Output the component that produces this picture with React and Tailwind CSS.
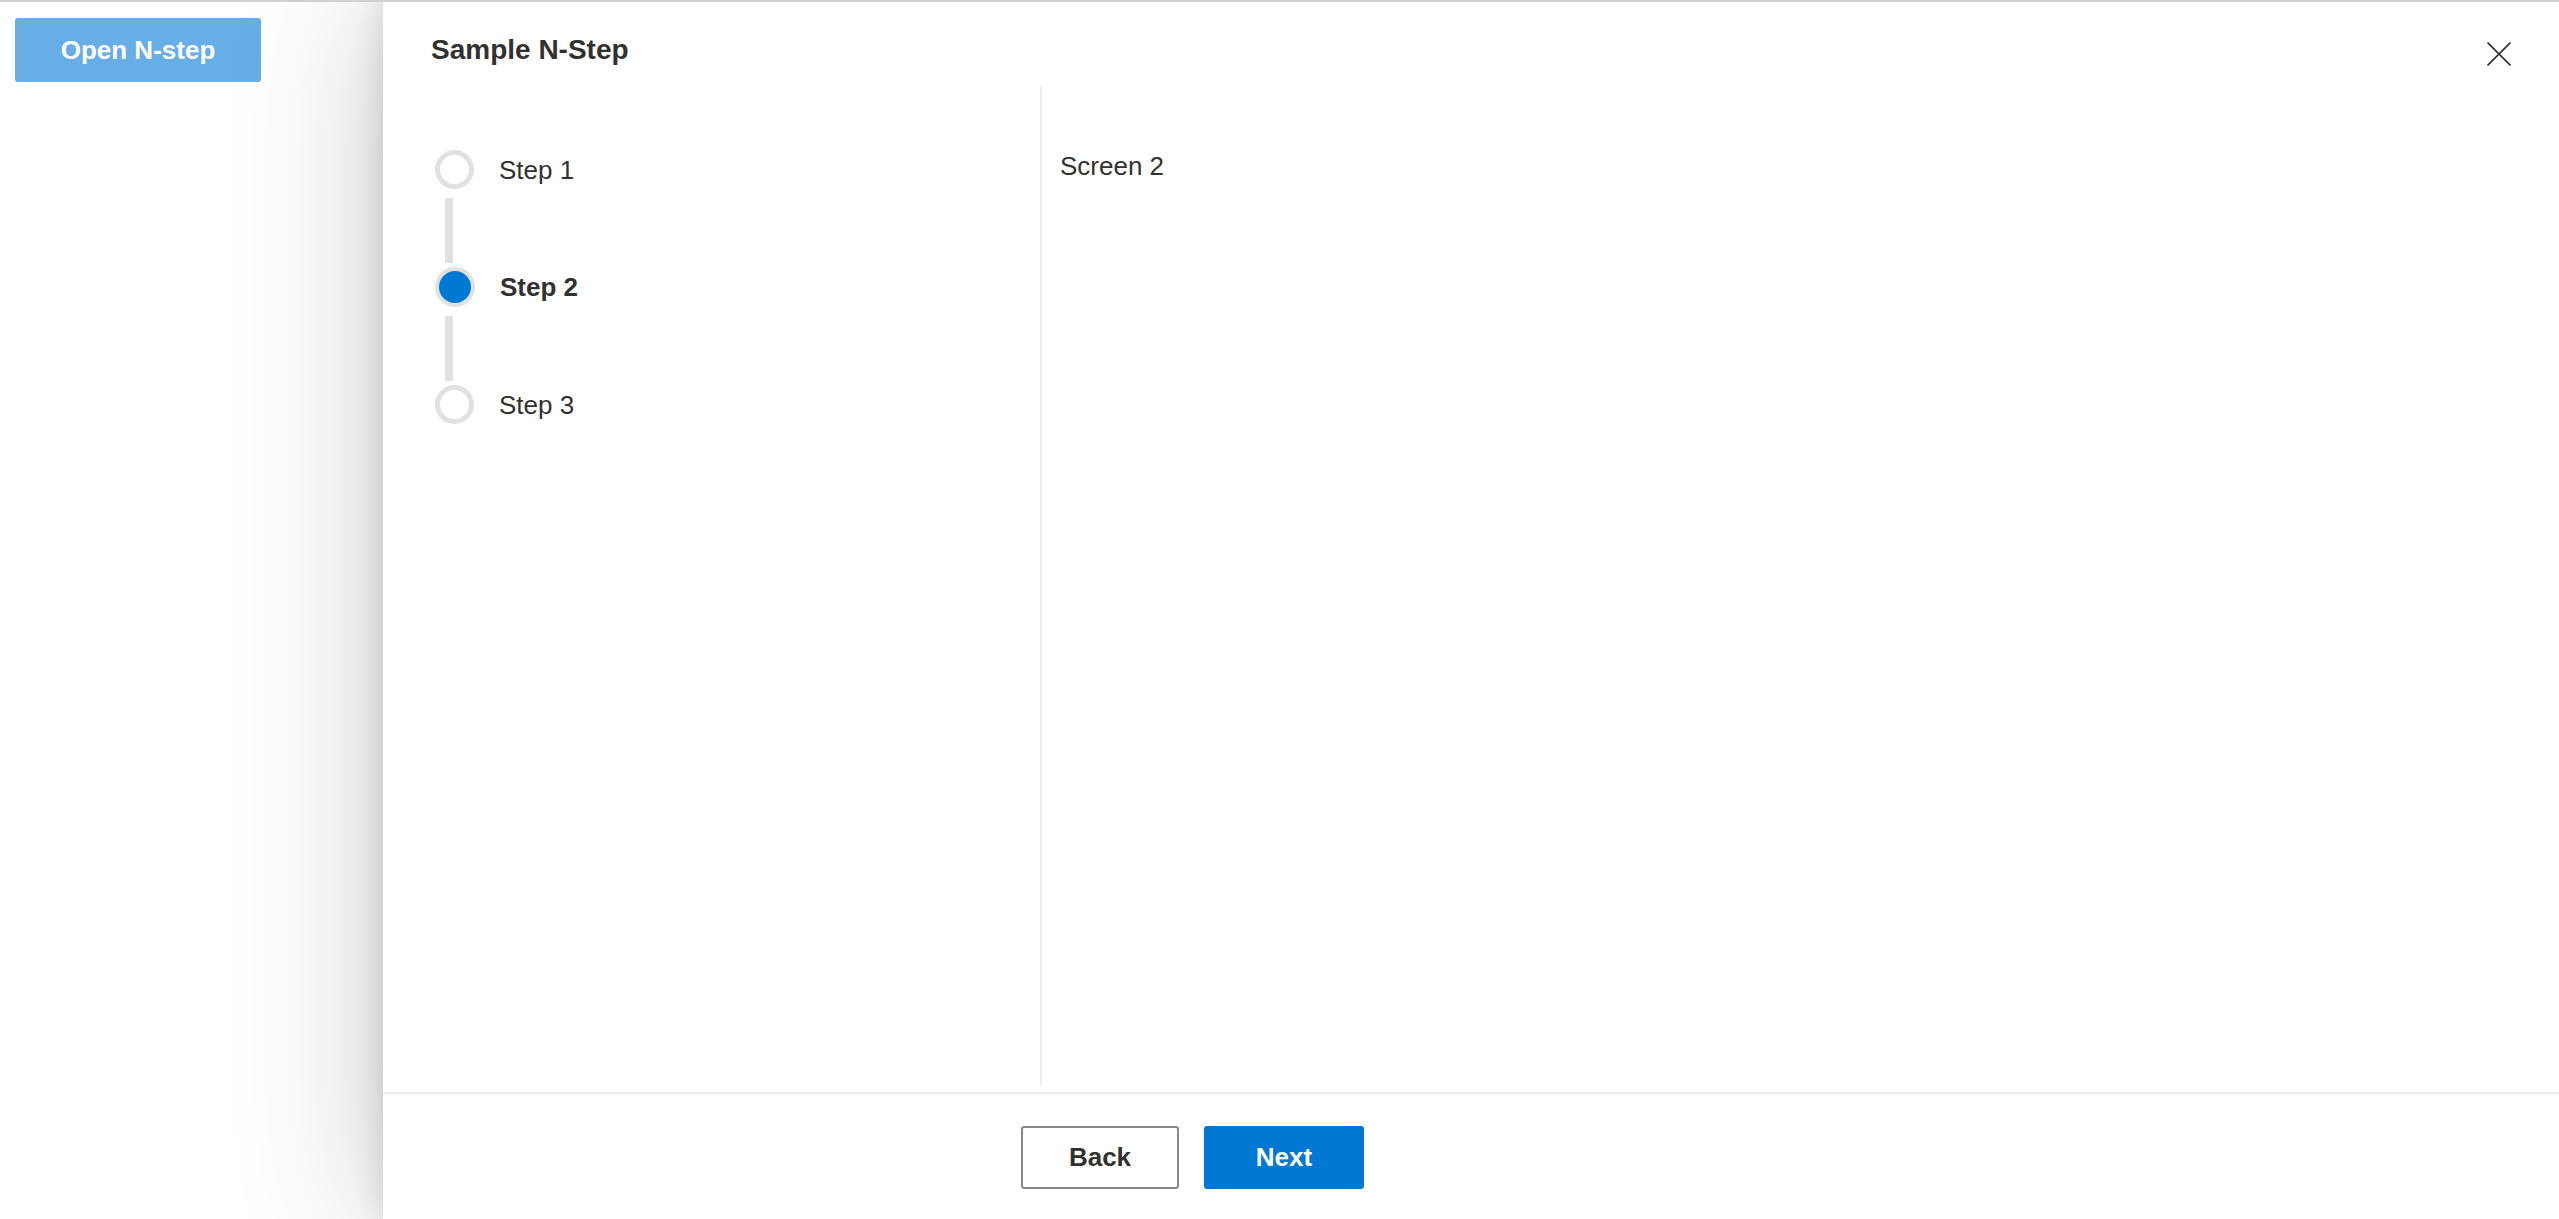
const font = { fontFamily: '"Liberation Sans", Arial, sans-serif' };

function StepDot({ active }) {
  if (active) {
    return (
      <div className="flex size-[40px] shrink-0 items-center justify-center rounded-full bg-[#e1e1e1]">
        <div className="size-[32px] rounded-full bg-[#0078d4]" />
      </div>
    );
  }
  return <div className="size-[39px] shrink-0 rounded-full border-[5px] border-[#e1e1e1] bg-white" />;
}

function Connector() {
  return <div className="ml-[10px] mt-[9px] h-[65px] w-[8px] bg-[#e1e1e1]" />;
}

const steps = [
  { label: "Step 1", active: false },
  { label: "Step 2", active: true },
  { label: "Step 3", active: false },
];

export default function App() {
  return (
    <div
      className="relative h-[1219px] w-full overflow-hidden border-t-2 border-[#d0d0d0] bg-white text-[#323130]"
      style={font}
    >
      <div className="pl-[15px] pt-[16px]">
        <button className="flex h-[64px] w-[246px] items-center justify-center rounded-[3px] bg-[#66aee5] text-[26px] font-semibold text-white">
          Open N-step
        </button>
      </div>

      <div className="absolute bottom-0 left-[383px] right-0 top-0 flex flex-col bg-white shadow-[0_0_140px_rgba(0,0,0,0.22),0_0_30px_rgba(0,0,0,0.14)]">
        <header className="flex h-[84px] shrink-0 items-center justify-between pl-[48px] pr-[48px] pt-[12px]">
          <h1 className="text-[28px] font-semibold leading-none">Sample N-Step</h1>
          <button className="mt-[8px] flex size-[24px] items-center justify-center" aria-label="Close">
            <svg width="24" height="24" viewBox="0 0 24 24" fill="none" stroke="#323130" strokeWidth="1.6">
              <path d="M0.5 0.5L23.5 23.5M23.5 0.5L0.5 23.5" />
            </svg>
          </button>
        </header>

        <div className="flex min-h-0 flex-1 pb-[7px]">
          <nav className="w-[657px] shrink-0 pl-[52px] pt-[64px]">
            {steps.map((s, i) => (
              <div key={s.label}>
                {i > 0 && <Connector />}
                <div className={`flex items-center gap-[25px] ${i > 0 ? "mt-[4px]" : ""}`}>
                  <StepDot active={s.active} />
                  <span className={`text-[26px] leading-none ${s.active ? "font-bold" : ""}`}>{s.label}</span>
                </div>
              </div>
            ))}
          </nav>
          <div className="w-[2px] shrink-0 bg-[#ededed]" />
          <main className="flex-1 pl-[18px] pt-[62px]">
            <p className="text-[26px] leading-[36px]">Screen 2</p>
          </main>
        </div>

        <footer className="flex h-[127px] shrink-0 items-start gap-[25px] border-t-2 border-[#ededed] pl-[638px] pt-[32px]">
          <button className="flex h-[63px] w-[158px] items-center justify-center rounded-[3px] border-2 border-[#8a8886] bg-white text-[26px] font-semibold text-[#323130]">
            Back
          </button>
          <button className="flex h-[63px] w-[160px] items-center justify-center rounded-[3px] bg-[#0078d4] text-[26px] font-semibold text-white">
            Next
          </button>
        </footer>
      </div>
    </div>
  );
}
